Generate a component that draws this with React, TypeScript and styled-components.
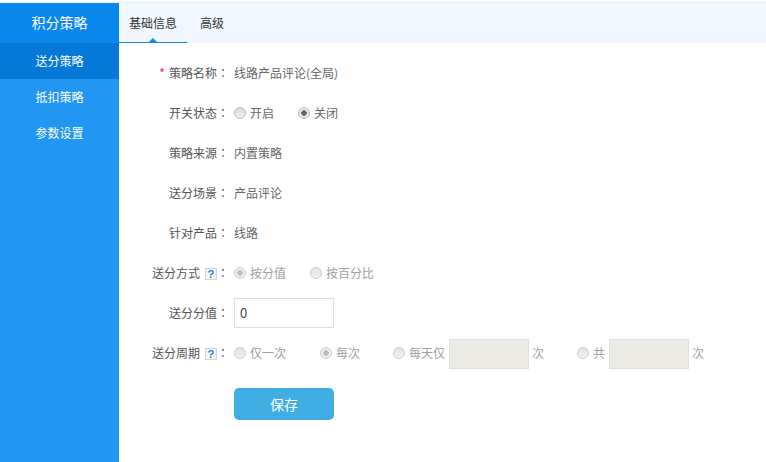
import React from "react";
import styled, { createGlobalStyle } from "styled-components";

const GlobalStyle = createGlobalStyle`
  html, body {
    margin: 0;
    padding: 0;
    background: #fff;
  }
  body {
    font-family: "Noto Sans CJK SC", "Liberation Sans", sans-serif;
    font-size: 12px;
    color: #666;
  }
`;

const Page = styled.div`
  width: 766px;
  height: 459px;
  margin-top: 2px;
  border-top: 1px solid #e6eef6;
  overflow: hidden;
  display: flex;
`;

const Sidebar = styled.div`
  width: 119px;
  flex: none;
  background: #2196f3;
`;

const SideTitle = styled.div`
  height: 40px;
  box-sizing: border-box;
  padding-bottom: 2px;
  line-height: 38px;
  text-align: center;
  font-size: 14px;
  color: #fff;
  background: #0a88ee;
`;

const SideItem = styled.div<{ $active?: boolean }>`
  height: 36px;
  line-height: 36px;
  text-align: center;
  font-size: 12px;
  color: #fff;
  background: ${(p) => (p.$active ? "#0679d8" : "transparent")};
`;

const Main = styled.div`
  flex: 1;
  min-width: 0;
`;

const Tabs = styled.div`
  height: 40px;
  display: flex;
  background: #f0f7fe;
`;

const Tab = styled.div<{ $active?: boolean }>`
  position: relative;
  width: 68px;
  box-sizing: border-box;
  line-height: 40px;
  text-align: center;
  font-size: 12px;
  color: #333;
  border-bottom: 1px solid ${(p) => (p.$active ? "#0a88ee" : "transparent")};
  ${(p) =>
    p.$active &&
    `&::after {
      content: "";
      position: absolute;
      left: 30px;
      bottom: 0;
      border: 4px solid transparent;
      border-top: 0;
      border-bottom-color: #0a88ee;
    }`}
`;

const TabPlain = styled(Tab)`
  width: 50px;
`;

const Form = styled.div`
  padding-top: 10px;
`;

const Row = styled.div`
  height: 40px;
  display: flex;
  align-items: center;
`;

const Label = styled.div`
  width: 115px;
  flex: none;
  padding: 0 5px 2px 0;
  box-sizing: border-box;
  text-align: right;
  color: #555;
  white-space: nowrap;
`;

// the TC face centres the full-width colon in its cell, as the original does
const Colon = styled.span`
  font-family: "Noto Sans CJK TC", sans-serif;
`;

const Star = styled.span`
  color: #f0245c;
  margin-right: 4px;
`;

const Help = styled.span`
  display: inline-block;
  width: 10px;
  height: 10px;
  line-height: 10px;
  margin-left: 5px;
  vertical-align: 0;
  border: 1px solid #d4d4d4;
  background: #f7f7f7;
  text-align: center;
  font-family: "Liberation Sans", sans-serif;
  font-size: 11px;
  font-weight: 700;
  color: #0a88ee;
`;

const Value = styled.div`
  padding-bottom: 2px;
  color: #666;
`;

const RadioItem = styled.div<{ $gap?: number }>`
  display: flex;
  align-items: center;
  margin-right: ${(p) => p.$gap ?? 0}px;
`;

const RadioDot = styled.span<{ $checked?: boolean; $disabled?: boolean }>`
  width: 12px;
  height: 12px;
  box-sizing: border-box;
  flex: none;
  margin-right: 4px;
  border-radius: 50%;
  border: 1px solid #bdbdbd;
  background: ${(p) =>
    p.$checked
      ? `radial-gradient(circle, ${p.$disabled ? "#a8a8a8" : "#666"} 0 2.5px, #e8e8e8 3px)`
      : "linear-gradient(#d8d8d8, #efefef)"};
  opacity: ${(p) => (p.$disabled ? 0.75 : 1)};
`;

const RadioText = styled.span<{ $muted?: boolean }>`
  padding-bottom: 2px;
  color: ${(p) => (p.$muted ? "#a0a0a0" : "#666")};
`;

const TextInput = styled.div`
  width: 100px;
  height: 30px;
  box-sizing: border-box;
  border: 1px solid #ddd;
  padding-left: 5px;
  line-height: 28px;
  font-size: 13px;
  color: #444;
`;

const DisabledInput = styled.div`
  width: 80px;
  height: 30px;
  box-sizing: border-box;
  margin: 2px 3px 0 4px;
  background: #ebebe4;
  border: 1px solid #dcdfe3;
`;

const Actions = styled.div`
  padding: 15px 0 0 115px;
`;

const SaveButton = styled.button`
  display: block;
  width: 100px;
  height: 32px;
  padding: 0;
  border: 0;
  border-radius: 5px;
  background: #41aee3;
  color: #fff;
  font-family: inherit;
  font-size: 14px;
`;

export default function App() {
  return (
    <Page>
      <GlobalStyle />
      <Sidebar>
        <SideTitle>积分策略</SideTitle>
        <SideItem $active>送分策略</SideItem>
        <SideItem>抵扣策略</SideItem>
        <SideItem>参数设置</SideItem>
      </Sidebar>
      <Main>
        <Tabs>
          <Tab $active>基础信息</Tab>
          <TabPlain>高级</TabPlain>
        </Tabs>
        <Form>
          <Row>
            <Label>
              <Star>*</Star>策略名称<Colon>：</Colon>
            </Label>
            <Value>线路产品评论(全局)</Value>
          </Row>
          <Row>
            <Label>开关状态<Colon>：</Colon></Label>
            <RadioItem $gap={24}>
              <RadioDot />
              <RadioText>开启</RadioText>
            </RadioItem>
            <RadioItem>
              <RadioDot $checked />
              <RadioText>关闭</RadioText>
            </RadioItem>
          </Row>
          <Row>
            <Label>策略来源<Colon>：</Colon></Label>
            <Value>内置策略</Value>
          </Row>
          <Row>
            <Label>送分场景<Colon>：</Colon></Label>
            <Value>产品评论</Value>
          </Row>
          <Row>
            <Label>针对产品<Colon>：</Colon></Label>
            <Value>线路</Value>
          </Row>
          <Row>
            <Label>
              送分方式
              <Help>?</Help>
              <Colon>：</Colon>
            </Label>
            <RadioItem $gap={24}>
              <RadioDot $checked $disabled />
              <RadioText $muted>按分值</RadioText>
            </RadioItem>
            <RadioItem>
              <RadioDot $disabled />
              <RadioText $muted>按百分比</RadioText>
            </RadioItem>
          </Row>
          <Row>
            <Label>送分分值<Colon>：</Colon></Label>
            <TextInput>0</TextInput>
          </Row>
          <Row>
            <Label>
              送分周期
              <Help>?</Help>
              <Colon>：</Colon>
            </Label>
            <RadioItem $gap={34}>
              <RadioDot $disabled />
              <RadioText $muted>仅一次</RadioText>
            </RadioItem>
            <RadioItem $gap={33}>
              <RadioDot $checked $disabled />
              <RadioText $muted>每次</RadioText>
            </RadioItem>
            <RadioItem $gap={33}>
              <RadioDot $disabled />
              <RadioText $muted>每天仅</RadioText>
              <DisabledInput />
              <RadioText $muted>次</RadioText>
            </RadioItem>
            <RadioItem>
              <RadioDot $disabled />
              <RadioText $muted>共</RadioText>
              <DisabledInput />
              <RadioText $muted>次</RadioText>
            </RadioItem>
          </Row>
          <Actions>
            <SaveButton>保存</SaveButton>
          </Actions>
        </Form>
      </Main>
    </Page>
  );
}
